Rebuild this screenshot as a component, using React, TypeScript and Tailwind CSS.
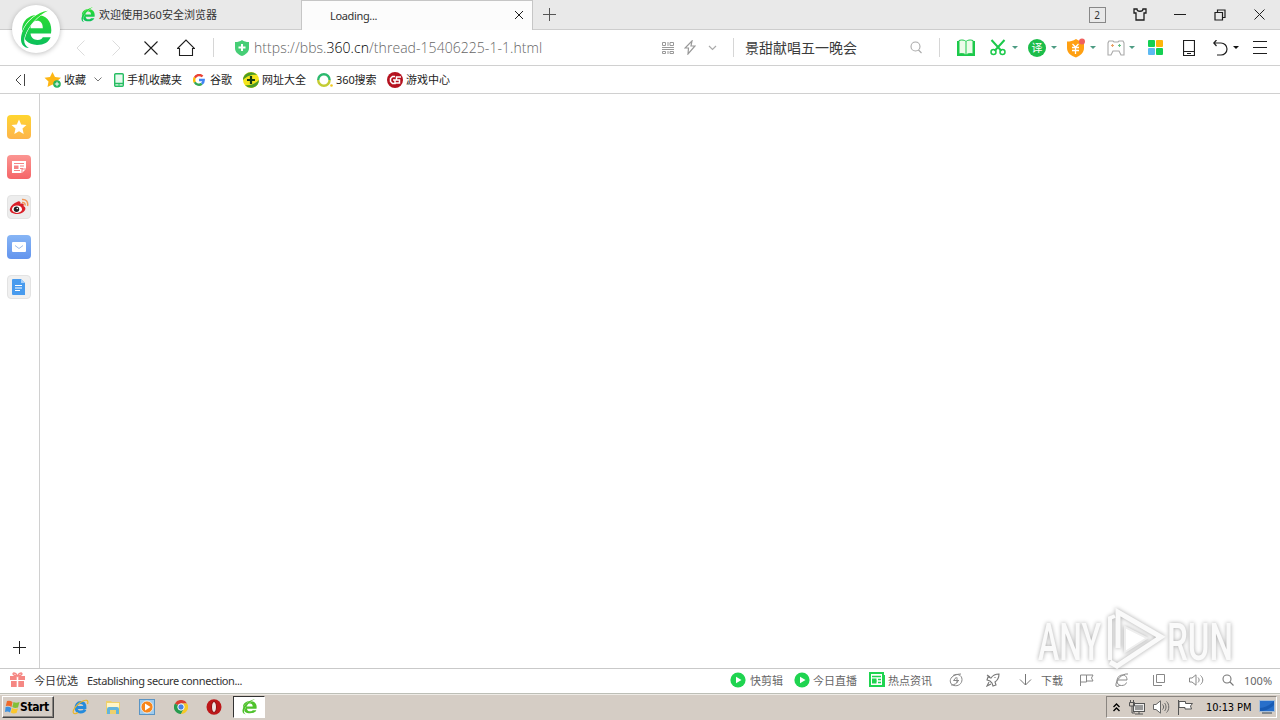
import type { ReactNode } from "react";

const GREEN = "#1cc94b";

// fixed-width slot, content centered inside
const Slot = ({ className = "", children }: { className?: string; children?: ReactNode }) => (
  <div className={`flex h-full shrink-0 items-center justify-center ${className}`}>{children}</div>
);

const Label = ({ className = "", children }: { className?: string; children: ReactNode }) => (
  <span className={`shrink-0 whitespace-nowrap ${className}`}>{children}</span>
);

const BrowserLogo = ({ className = "", flat = false }: { className?: string; flat?: boolean }) => (
  <svg className={className} viewBox="60 30 94 116" preserveAspectRatio="none" fill="none">
    <defs>
      <linearGradient id="leaf" gradientUnits="userSpaceOnUse" x1="0" y1="33" x2="0" y2="143">
        <stop offset="0" stopColor="#2fe02c" />
        <stop offset="1" stopColor="#08bd60" />
      </linearGradient>
    </defs>
    <path
      fillRule="evenodd"
      fill={flat ? "#4fc22c" : "url(#leaf)"}
      d="M151 100H91C92 112 100 119 112 119C120 119 124 116 127 111H150C144 126 131 134 110 134C84 134 66 116 66 89C66 63 86 45 110 45C136 45 152 62 152 90ZM91 84H127C127 70 121 62 110 62C99 62 92 71 91 84Z"
    />
    <path
      d="M142 32C112 36 78 62 66 98C58 122 65 141 86 143C73 135 69 124 75 106C85 76 112 46 142 32Z"
      fill={flat ? "#4fc22c" : "url(#leaf)"}
      stroke="#fff"
      strokeWidth="3.500"
      paintOrder="stroke"
    />
  </svg>
);

const Caret = ({ color = "#4d9c83" }: { color?: string }) => (
  <svg width="6" height="3" viewBox="0 0 6 3">
    <path d="M0 0H6L3 3Z" fill={color} />
  </svg>
);

const Line = ({
  d,
  w,
  h,
  color = "#1e1e1e",
  sw = 1,
}: {
  d: string;
  w: number;
  h: number;
  color?: string;
  sw?: number;
}) => (
  <svg width={w} height={h} viewBox={`0 0 ${w} ${h}`} fill="none" stroke={color} strokeWidth={sw}>
    <path d={d} />
  </svg>
);

const TabBar = () => (
  <div className="flex h-[30px] items-stretch border-b border-[#cdcdcd] bg-[#e9e9e9] text-[11px] text-[#333]">
    <div className="flex w-[301px] items-center pl-[81px]">
      <BrowserLogo className="h-[16px] w-[14px]" />
      <Label className="ml-[4px]">欢迎使用360安全浏览器</Label>
    </div>
    <div className="-mb-px flex w-[232px] items-center border-x border-t border-[#c6c6c6] bg-[#fcfcfc] pr-[8px] pb-px pl-[28px]">
      <Label className="grow tracking-[-0.35px]">Loading...</Label>
      <Line w={10} h={10} d="M1 1L9 9M9 1L1 9" />
    </div>
    <Slot className="w-[32px]">
      <Line w={13} h={13} d="M6.500 0V13M0 6.500H13" color="#555" />
    </Slot>
    <div className="grow" />
    <Slot className="w-[20px]">
      <span className="flex h-[16px] w-[17px] items-center justify-center border border-[#888] text-[10px]">2</span>
    </Slot>
    <Slot className="ml-[12px] w-[42px]">
      <Line w={14} h={13} sw={1.3} d="M4 1H1V5H3V12H11V5H13V1H10C10 4 4 4 4 1Z" />
    </Slot>
    <Slot className="w-[38px]">
      <Line w={12} h={2} d="M0 .5H12" />
    </Slot>
    <Slot className="w-[41px]">
      <Line w={12} h={12} sw={1.2} d="M1 3.500H8.500V11H1ZM3.500 3V1H11V8.500H9" />
    </Slot>
    <Slot className="mr-[1px] w-[39px]">
      <Line w={11} h={11} d="M.5 .5L10.500 10.500M10.500 .5L.5 10.500" />
    </Slot>
  </div>
);

const Divider = () => <span className="h-[19px] w-px bg-[#d6d6d6]" />;

const Toolbar = () => (
  <div className="flex h-[36px] items-center border-b border-[#d0d0d0] bg-white">
    <Slot className="ml-[63px] w-[34px]">
      <Line w={9} h={16} d="M8.500 .5L1 8L8.500 15.500" color="#dcdcdc" />
    </Slot>
    <Slot className="ml-px w-[36px]">
      <Line w={9} h={16} d="M.5 .5L8 8L.5 15.500" color="#dcdcdc" />
    </Slot>
    <Slot className="w-[34px]">
      <Line w={14} h={14} sw={1.1} d="M.5 .5L13.500 13.500M13.500 .5L.5 13.500" />
    </Slot>
    <Slot className="w-[36px]">
      <Line w={18} h={18} sw={1.1} d="M.5 9.500L9 1L17.500 9.500H15.500V16.500H2.500V9.500Z" />
    </Slot>
    <Slot className="w-[19px]">
      <Divider />
    </Slot>
    <Slot className="ml-[11px] w-[16px]">
      <svg width="14" height="16" viewBox="0 0 14 16">
        <path d="M7 0C9 1.500 11 2 14 2V8C14 12 11 14.500 7 16C3 14.500 0 12 0 8V2C3 2 5 1.500 7 0Z" fill="#46ce76" />
        <path d="M7 4V11M3.500 7.500H10.500" stroke="#fff" strokeWidth="2" />
      </svg>
    </Slot>
    <Label className="ml-[4px] w-[405px] pt-px font-['Open_Sans','Noto_Sans_CJK_SC',sans-serif] text-[14px] font-light tracking-[0.05px] text-[#666]">
      https://bbs.<span className="text-black">360.cn</span>/thread-15406225-1-1.html
    </Label>
    <Slot className="w-[18px]">
      <Line
        w={12}
        h={12}
        color="#999"
        d="M.5 .5H3.500V3.500H.5ZM8 .5H11.500V3.500H8ZM6 0V4M0 5.500H12M0 7.500H12M.5 9.500H3.500V11.500H.5ZM8 9.500H11.500V11.500H8ZM6 9V12"
      />
    </Slot>
    <Slot className="ml-[2px] w-[22px]">
      <Line w={12} h={15} sw={1.2} color="#999" d="M8 1L1 8H4.500L4 14L11 6H7Z" />
    </Slot>
    <Slot className="w-[22px]">
      <Line w={9} h={6} sw={1.2} color="#aaa" d="M1 1L4.500 4.500L8 1" />
    </Slot>
    <Slot className="w-[20px]">
      <Divider />
    </Slot>
    <Label className="ml-[2px] w-[165px] text-[14px] text-[#3c3c3c]">景甜献唱五一晚会</Label>
    <Slot className="w-[12px]">
      <Line w={12} h={13} sw={1.1} color="#aaa" d="M1 5.500A4.500 4.500 0 1 0 10 5.500A4.500 4.500 0 1 0 1 5.500M8.500 9L11.500 12" />
    </Slot>
    <Slot className="ml-[12px] w-[10px]">
      <Divider />
    </Slot>

    {/* extensions */}
    <Slot className="ml-[12px] w-[20px]">
      <svg width="18" height="18" viewBox="0 0 18 18">
        <path d="M0 2H2V15H16V2H18V17H0Z" fill={GREEN} />
        <path d="M2 1.500C5 .5 7.500 1 9 2.500C10.500 1 13 .5 16 1.500V15C13 14 11 14.500 9 16C7 14.500 5 14 2 15Z" fill="#edfbe9" stroke={GREEN} />
        <path d="M9 3V15" stroke={GREEN} />
      </svg>
    </Slot>
    <Slot className="ml-[12px] w-[20px]">
      <svg width="16" height="17" viewBox="0 0 16 17" fill="none" stroke={GREEN} strokeWidth="2">
        <path d="M1.500 1L11.500 12M14.500 1L4.500 12" />
        <circle cx="3.500" cy="13" r="2.500" strokeWidth="1.500" />
        <circle cx="12.500" cy="13" r="2.500" strokeWidth="1.500" />
      </svg>
    </Slot>
    <Slot className="ml-[4px] w-[6px]">
      <Caret />
    </Slot>
    <Slot className="ml-[9px] w-[20px]">
      <span className="flex h-[18px] w-[18px] items-center justify-center rounded-full bg-[#1cbd4a] text-[11px] leading-none text-white">
        译
      </span>
    </Slot>
    <Slot className="ml-[4px] w-[6px]">
      <Caret />
    </Slot>
    <Slot className="ml-[9px] w-[20px]">
      <svg width="20" height="20" viewBox="0 0 20 20">
        <path d="M10 1C13 3 15 3.500 18 3.500V10C18 15 14 17.500 10 19.500C5 17.500 1 15 1 10V3.500C4 3.500 7 3 10 1Z" fill="#ffa012" />
        <path d="M6.500 6L9.500 9L12.500 6M6 9.500H13M6 12.500H13M9.500 9V16" stroke="#fff" strokeWidth="1.300" fill="none" />
        <circle cx="16" cy="3.500" r="3" fill="#f0605f" />
      </svg>
    </Slot>
    <Slot className="ml-[4px] w-[6px]">
      <Caret />
    </Slot>
    <Slot className="ml-[10px] w-[20px]">
      <svg width="18" height="16" viewBox="0 0 18 16" fill="none" stroke="#aaa" strokeWidth="1.100">
        <path d="M2 1H6L7 2H11L12 1H16L17 3V15H14L12 11H6L4 15H1V3Z" />
        <path d="M5.500 4V7M4 5.500H7" stroke="#e9a36a" />
        <path d="M12.500 4V7M11 5.500H14" stroke="#65c184" />
      </svg>
    </Slot>
    <Slot className="ml-[3px] w-[6px]">
      <Caret />
    </Slot>
    <Slot className="ml-[10px] w-[20px]">
      <div className="grid grid-cols-2 gap-px">
        <i className="h-[7px] w-[7px] rounded-[1px] bg-[#14cf52]" />
        <i className="h-[7px] w-[7px] rounded-[1px] bg-[#fdb50b]" />
        <i className="h-[7px] w-[7px] rounded-[1px] bg-[#5db9f2]" />
        <i className="h-[7px] w-[7px] rounded-[1px] bg-[#14cf52]" />
      </div>
    </Slot>
    <Slot className="ml-[14px] w-[20px]">
      <Line w={12} h={16} sw={1.2} d="M.5 .5H11.500V15.500H.5ZM1 11.500H11M4 13.500H8" />
    </Slot>
    <Slot className="ml-[11px] w-[20px]">
      <Line w={15} h={16} sw={1.2} d="M3.500 0L.8 3L3.500 6M1 3H8A5.800 5.800 0 0 1 8 15H4" />
    </Slot>
    <Slot className="ml-[2px] w-[8px]">
      <Caret color="#111" />
    </Slot>
    <Slot className="ml-[10px] w-[20px]">
      <Line w={14} h={13} d="M0 .5H14M0 6.500H14M0 12.500H14" />
    </Slot>
  </div>
);

const BookmarkBar = () => (
  <div className="flex h-[28px] items-center border-b border-[#d0d0d0] bg-white text-[11px] text-[#222]">
    <Slot className="ml-[12px] w-[16px]">
      <Line w={10} h={12} d="M6 1L1 6L6 11M9.500 0V12" color="#444" />
    </Slot>
    <Slot className="ml-[16px] w-[18px]">
      <svg width="18" height="16" viewBox="0 0 18 16">
        <path d="M8.500 0L11 5L17 5.800L12.500 9.500L13.500 15L8.500 12.500L3.500 15L4.500 9.500L.5 5.800L6 5Z" fill="#fdb614" />
        <circle cx="13" cy="12" r="3.800" fill="#25b35d" />
        <path d="M13 9.800V14.200M10.800 12H15.200" stroke="#fff" />
      </svg>
    </Slot>
    <Label className="ml-[2px] w-[22px]">收藏</Label>
    <Slot className="ml-[7px] w-[9px]">
      <Line w={8} h={5} d="M.5 .5L4 4L7.500 .5" color="#777" />
    </Slot>
    <Slot className="ml-[11px] w-[12px]">
      <svg width="10" height="14" viewBox="0 0 10 14" fill="none" stroke="#27bd62" strokeWidth="1.400">
        <rect x=".7" y=".7" width="8.600" height="12.600" rx="1" fill="#e7faee" />
        <path d="M1 10.500H9M4.500 12H5.500" />
      </svg>
    </Slot>
    <Label className="ml-[2px] w-[55px]">手机收藏夹</Label>
    <Slot className="ml-[11px] w-[12px]">
      <svg width="12" height="12" viewBox="0 0 12 12" fill="none" strokeWidth="2.400">
        <path d="M9.500 2.500A4.700 4.700 0 0 0 1.800 3.700" stroke="#ea4335" />
        <path d="M1.800 3.700A4.700 4.700 0 0 0 1.800 8.300" stroke="#fbbc05" />
        <path d="M1.800 8.300A4.700 4.700 0 0 0 8.800 9.800" stroke="#34a853" />
        <path d="M8.800 9.800A4.700 4.700 0 0 0 10.700 6H6" stroke="#4285f4" />
      </svg>
    </Slot>
    <Label className="ml-[5px] w-[22px]">谷歌</Label>
    <Slot className="ml-[11px] w-[16px]">
      <svg width="16" height="16" viewBox="0 0 16 16">
        <circle cx="8" cy="8" r="8" fill="#f4e51b" />
        <path d="M14 3A8 8 0 0 0 0 8C3 5 8 2 14 3M2 13A8 8 0 0 0 16 8C13 11 8 14 2 13" fill="#4a9c26" />
        <path d="M8 4V12M4 8H12" stroke="#123b13" strokeWidth="2.200" />
      </svg>
    </Slot>
    <Label className="ml-[3px] w-[44px]">网址大全</Label>
    <Slot className="ml-[11px] w-[16px]">
      <svg width="16" height="14" viewBox="0 0 16 14" fill="none" strokeWidth="2.400">
        <path d="M1.200 7A5.700 5.700 0 0 1 12.600 7" stroke="#2cb96e" />
        <path d="M12.600 7A5.700 5.700 0 0 1 1.200 7" stroke="#c3cc32" />
        <circle cx="14.500" cy="12.500" r="1.300" fill="#f2c81e" />
      </svg>
    </Slot>
    <Label className="ml-[3px] w-[40px] tracking-[-0.1px]">360搜索</Label>
    <Slot className="ml-[11px] w-[16px]">
      <svg width="16" height="16" viewBox="0 0 16 16" fill="none">
        <circle cx="8" cy="8" r="8" fill="#b5121f" />
        <path d="M8 4.500H5.500L3.500 6.500V9.500L5.500 11.500H8V8H6M14 5H9.500V8H12.500V11H8.500" stroke="#fff" strokeWidth="1.500" />
      </svg>
    </Slot>
    <Label className="ml-[3px]">游戏中心</Label>
  </div>
);

const Sidebar = () => (
  <aside className="flex w-[40px] shrink-0 flex-col items-center gap-4 border-r border-[#d0d0d0] bg-white pt-[21px] pr-px">
    <div className="flex h-6 w-6 items-center justify-center rounded-[4px] bg-gradient-to-b from-[#ffd52e] to-[#fdb44a]">
      <svg width="16" height="16" viewBox="0 0 16 16">
        <path d="M8 .5L10.200 5.500L15.500 6L11.500 9.600L12.700 15L8 12.200L3.300 15L4.500 9.600L.5 6L5.800 5.500Z" fill="#fff" />
      </svg>
    </div>
    <div className="flex h-6 w-6 items-center justify-center rounded-[4px] bg-gradient-to-b from-[#fb9592] to-[#f56468]">
      <svg width="14" height="14" viewBox="0 0 14 14">
        <path d="M0 1H14V9L10 13H0Z" fill="#fff" />
        <path d="M2 3.500H12M8 6H12M8 8.500H11M2 10.500H8M10 13V9H14" stroke="#f58385" fill="none" />
        <path d="M2 5.500H6.500V9H2Z" fill="#f58385" />
      </svg>
    </div>
    <div className="flex h-6 w-6 items-center justify-center rounded-[4px] border border-[#e3e3e3] bg-[#ededed]">
      <svg width="20" height="18" viewBox="0 0 20 18" fill="none">
        <path d="M8 4C10 2.500 12 3.500 11.500 6C14 5 15.500 6 14.500 8C19 10 15 16 8.500 16C3 16 0 13.500 1 10.500C2 7.500 5 5 8 4Z" fill="#da2029" />
        <ellipse cx="8" cy="11.200" rx="5" ry="3.700" fill="#fff" />
        <circle cx="7.500" cy="11.300" r="2.700" fill="#222" />
        <circle cx="8.300" cy="10.500" r=".8" fill="#fff" />
        <path d="M13 4.500C15 4 16.500 5.500 16 7.500M13 1.500C17 1 19.500 4 18.500 8" stroke="#f29658" strokeWidth="1.500" />
      </svg>
    </div>
    <div className="flex h-6 w-6 items-center justify-center rounded-[4px] bg-gradient-to-b from-[#87b5f5] to-[#6394ee]">
      <svg width="14" height="10" viewBox="0 0 14 10">
        <rect width="14" height="10" rx="1" fill="#fff" />
        <path d="M3 3.500L7 6.500L11 3.500" stroke="#9dbbe9" fill="none" />
      </svg>
    </div>
    <div className="flex h-6 w-6 items-center justify-center rounded-[4px] border border-[#e3e3e3] bg-[#f0f0f0] pr-px">
      <svg width="13" height="16" viewBox="0 0 13 16">
        <path d="M1 0H9L13 4V16H1Q0 16 0 15V1Q0 0 1 0Z" fill="#489bee" />
        <path d="M9 0V4H13" fill="#a6d0fa" />
        <path d="M3 6.500H10M3 9H10M3 11.500H8" stroke="#fff" />
      </svg>
    </div>
    <div className="mt-auto mb-[14px]">
      <Line w={13} h={13} d="M6.500 0V13M0 6.500H13" />
    </div>
  </aside>
);

const Watermark = () => (
  <svg className="overflow-visible" width="206" height="70" viewBox="0 0 206 70">
    <g style={{ filter: "drop-shadow(0 0 2px #a8a8a8)" }}>
      <text x="4" y="52" fontFamily="Roboto" fontSize="51" fontWeight="500" fill="#fafafa" textLength="63" lengthAdjust="spacingAndGlyphs">
        ANY
      </text>
      <text x="133" y="52" fontFamily="Roboto" fontSize="51" fontWeight="500" fill="#fafafa" textLength="66" lengthAdjust="spacingAndGlyphs">
        RUN
      </text>
      <path d="M76 52V10L81 8" stroke="#fafafa" strokeWidth="4" fill="none" />
      <path d="M84 40V4L127 29L83 58L76 54" stroke="#fafafa" strokeWidth="5" fill="none" />
      <path d="M91 19L113 30L91 44Z" stroke="#eee" strokeWidth="2" fill="#fff" />
    </g>
  </svg>
);

const PlayBadge = () => (
  <svg className="mb-[2px] shrink-0" width="16" height="16" viewBox="0 0 16 16">
    <circle cx="8" cy="8" r="7.600" fill="#1fd450" />
    <path d="M6 4.700L11.500 8L6 11.300Z" fill="#fff" />
  </svg>
);

const StatusBar = () => (
  <div className="relative flex h-[25px] items-center border-t border-[#c9c9c9] bg-white pb-px text-[11px] text-[#666]">
    <Slot className="ml-[9px] w-[17px] pb-[2px]">
      <svg width="15" height="15" viewBox="0 0 15 15">
        <path d="M0 4H6.700V8H0ZM8.300 4H15V8H8.300ZM1 9H6.700V15H1ZM8.300 9H14V15H8.300Z" fill="#f58783" />
        <path d="M7.500 4C3 4 2 1 4 1C6 1 7 3 7.500 4C8 3 9 1 11 1C13 1 12 4 7.500 4" stroke="#f58783" strokeWidth="1.300" fill="none" />
      </svg>
    </Slot>
    <Label className="ml-[8px] w-[53px] text-[#333]">今日优选</Label>
    <Label className="w-[643px] tracking-[-0.4px] text-[#333]">Establishing secure connection...</Label>
    <PlayBadge />
    <Label className="ml-[4px] w-[44px]">快剪辑</Label>
    <PlayBadge />
    <Label className="ml-[3px] w-[56px]">今日直播</Label>
    <svg className="mb-[2px] shrink-0" width="17" height="16" viewBox="0 0 17 16">
      <path d="M13 3H16V15H2" fill="#1fd450" />
      <rect x="1" y="1" width="13" height="13" fill="#fff" stroke="#1fd450" strokeWidth="2" />
      <path d="M3 4.500H12M9 7.500H12M9 10.500H12M3 9H7.500" stroke="#1fd450" strokeWidth="1.300" />
      <path d="M3 6.500H7.500V11.500H3Z" fill="#1fd450" />
    </svg>
    <Label className="ml-[2px] w-[57px]">热点资讯</Label>
    <Slot className="w-[22px] pb-[2px]">
      <Line w={14} h={14} color="#888" d="M4 2.500C8 0 13 2 13 6.500C13 11 9 13.500 5 12.500C1 11.500 0 7 3 4C5 2 9 1 12 1M7.500 4L4.500 7.500H10M8 4.500V10M2 12C6 12 8 10 9 8" />
    </Slot>
    <Slot className="ml-[14px] w-[24px] pb-[2px]">
      <Line w={14} h={14} sw={1.1} color="#777" d="M5 5C7 2 10 1 13 1C13 4 12 7 9 9L10 12L7 13L6 10L4 8L1 7L2 4ZM3 9L1 13L5 11M1 2L4 4M9 4V5" />
    </Slot>
    <Slot className="ml-[10px] w-[20px] pb-[2px]">
      <Line w={13} h={12} color="#777" d="M6.500 0V11M1 5.500L6.500 11L12 5.500" />
    </Slot>
    <Label className="ml-[6px] w-[22px]">下载</Label>
    <Slot className="ml-[13px] w-[22px] pb-[2px]">
      <Line w={14} h={12} color="#888" d="M.5 12V1H6.500V8H.5M6.500 1H13L11.500 4L13 7H6.500" />
    </Slot>
    <Slot className="ml-[14px] w-[20px] pb-[2px]">
      <Line w={14} h={14} color="#888" d="M3 7H12C12 3 9.500 2 7.500 2C4 2 2 5 2 8C2 11 4 12.500 6.500 12.500C9 12.500 11 11.500 11.500 9.500M13 1C7 0 0 8 1 13C2 14 4 13 5 12" />
    </Slot>
    <Slot className="ml-[17px] w-[20px] pb-[2px]">
      <Line w={12} h={12} color="#888" d="M3.500 .5H11.500V8.500H3.500ZM.5 1V11.500H9" />
    </Slot>
    <Slot className="ml-[17px] w-[20px] pb-[2px]">
      <Line w={15} h={12} color="#888" d="M.5 4H3L7 .8V11.200L3 8H.5ZM9 3.500C10.500 5 10.500 7 9 8.500M11.500 1.500C14.500 4 14.500 8 11.500 10.500" />
    </Slot>
    <Slot className="ml-[12px] w-[20px] pb-[2px]">
      <Line w={12} h={12} color="#777" sw={1.1} d="M1 5A4 4 0 1 0 9 5A4 4 0 1 0 1 5M8 8L11.500 11.500" />
    </Slot>
    <Label className="ml-[6px]">100%</Label>
  </div>
);

const Taskbar = () => (
  <div className="flex h-[27px] items-center border-t border-[#bdbfb7] bg-[#d5cdc5] font-['DejaVu_Sans_Condensed','Liberation_Sans',sans-serif] text-[11px] text-black shadow-[inset_0_1px_0_#eeebe6]">
    <button className="ml-[2px] flex h-[22px] w-[52px] items-center border border-t-white border-r-[#444] border-b-[#444] border-l-white pl-[2px] shadow-[inset_-1px_-1px_0_#8a8580]">
      <svg width="15" height="14" viewBox="0 0 15 14">
        <path d="M2 1Q5 0 7.500 2L6.500 7Q4 5 .8 6Z" fill="#f06a2b" />
        <path d="M8.500 2Q11 3.500 14.500 2L13 7.500Q10 8.500 7.300 7Z" fill="#82bf39" />
        <path d="M.6 7Q4 6 6.300 8L5 12.500Q3 11 0 12Z" fill="#3e91df" />
        <path d="M7 8Q10 9.500 13 8.500L11.500 13Q8 14 5.800 12.500Z" fill="#fbc72d" />
      </svg>
      <span className="text-[12px] font-bold tracking-[-0.4px]">Start</span>
    </button>
    <Slot className="ml-[17px] w-[18px]">
      <svg width="17" height="16" viewBox="0 0 17 16" fill="none">
        <path d="M5 8.500H13C13 5 11 3.500 8.500 3.500C5.500 3.500 4 6 4 8.500C4 12 6.500 13 8.500 13C11 13 12.500 12 13 10.500" stroke="#258bdc" strokeWidth="2.800" />
        <path d="M15.500 5C17 1 14 0 9 3C4 6 0 12 1.500 14C2 15 4 15 6 13.500" stroke="#e8b62c" strokeWidth="1.200" />
      </svg>
    </Slot>
    <Slot className="ml-[15px] w-[18px]">
      <svg width="16" height="15" viewBox="0 0 16 15">
        <path d="M1 1H6L7 2H15V14H1Z" fill="#eed06c" />
        <path d="M2 3H14V9H2Z" fill="#fff5c7" />
        <path d="M2 14V9Q2 7 4 7H12Q14 7 14 9V14H11V10H5V14Z" fill="#62b4dc" />
      </svg>
    </Slot>
    <Slot className="ml-[16px] w-[18px]">
      <svg width="16" height="16" viewBox="0 0 16 16">
        <rect x=".5" y=".5" width="15" height="15" fill="#9fcbed" stroke="#5a94c4" />
        <circle cx="8" cy="8" r="6" fill="#f7861c" stroke="#fff" strokeWidth=".7" />
        <path d="M6 4.500L11.500 8L6 11.500Z" fill="#fff" />
      </svg>
    </Slot>
    <Slot className="ml-[16px] w-[18px]">
      <svg width="14" height="14" viewBox="0 0 14 14">
        <path d="M7 7L.9 3.500A7 7 0 0 1 13.100 3.500H7Z" fill="#db3e30" />
        <path d="M7 7L.9 3.500A7 7 0 0 0 7 14L10 8.500Z" fill="#279b4e" />
        <path d="M7 3.500H13.100A7 7 0 0 1 7 14L10 8.500Z" fill="#f6c927" />
        <circle cx="7" cy="7" r="3.200" fill="#4783e5" stroke="#fff" />
      </svg>
    </Slot>
    <Slot className="ml-[15px] w-[18px]">
      <svg width="16" height="16" viewBox="0 0 16 16">
        <ellipse cx="8" cy="8" rx="7.500" ry="7.800" fill="#bd1719" />
        <ellipse cx="8" cy="8" rx="2.500" ry="5.500" fill="#eee5e3" stroke="#8d0c0e" />
      </svg>
    </Slot>
    <div className="ml-[10px] flex h-[22px] w-[32px] items-center justify-center border border-t-[#333] border-r-white border-b-white border-l-[#333] bg-white">
      <BrowserLogo className="h-[16px] w-[15px]" flat />
    </div>
    <div className="grow" />
    <div className="mr-[3px] flex h-[22px] w-[171px] items-center border border-t-[#8a8580] border-r-white border-b-white border-l-[#8a8580]">
      <Slot className="ml-[3px] w-[12px]">
        <Line w={7} h={9} sw={1.4} color="#000" d="M.5 4L3.500 1L6.500 4M.5 8L3.500 5L6.500 8" />
      </Slot>
      <Slot className="ml-[6px] w-[18px]">
        <svg width="16" height="15" viewBox="0 0 16 15" fill="none" stroke="#555">
          <rect x="4.500" y="3.500" width="11" height="8" fill="#eee" />
          <path d="M6 5H14V10H6Z" fill="#999" stroke="none" />
          <path d="M6 14H14M10 12V14M.5 2.500H5.500V6H.5ZM1.500 0V2M4.500 0V2M3 6V13H6" />
        </svg>
      </Slot>
      <Slot className="ml-[6px] w-[18px]">
        <svg width="17" height="14" viewBox="0 0 17 14" fill="none" stroke="#666">
          <path d="M.5 4.500H3L7.500 .8V13.200L3 9.500H.5Z" fill="#fff" />
          <path d="M9.500 4.500C11 6 11 8 9.500 9.500M11.500 3C13.500 5 13.500 9 11.500 11M13.500 1.500C16.500 4 16.500 10 13.500 12.500" />
        </svg>
      </Slot>
      <Slot className="ml-[6px] w-[18px]">
        <svg width="17" height="15" viewBox="0 0 17 15" stroke="#555">
          <path d="M1.500 0V15" />
          <path d="M2 1.500H8.500V3.500H15.500L13.500 6L14.500 9H8V7.500H2Z" fill="#fff" />
        </svg>
      </Slot>
      <Label className="ml-[12px] w-[46px] tracking-[-0.1px]">10:13 PM</Label>
      <Slot className="ml-[7px] w-[16px]">
        <svg width="16" height="14" viewBox="0 0 16 14">
          <rect x=".5" y=".5" width="15" height="11" fill="#286fca" stroke="#a7bed8" />
          <path d="M1 8Q8 8 15 1V5Q9 11 1 11Z" fill="#185bb4" />
          <path d="M3 13H13" stroke="#345" />
        </svg>
      </Slot>
    </div>
  </div>
);

export default function App() {
  return (
    <div className="relative flex h-[720px] w-[1280px] flex-col overflow-hidden bg-white font-['Noto_Sans','Noto_Sans_CJK_SC',sans-serif] leading-none">
      <TabBar />
      <Toolbar />
      <BookmarkBar />
      <div className="flex min-h-0 grow">
        <Sidebar />
        <main className="grow bg-white" />
      </div>
      <StatusBar />
      <Taskbar />
      {/* round menu logo sits over the tab strip and the toolbar */}
      <div className="absolute top-[5px] left-[12px] flex h-[48px] w-[48px] items-center justify-center rounded-full bg-white shadow-[0_1px_5px_rgba(0,0,0,0.25)]">
        <BrowserLogo className="h-[39px] w-[32px]" />
      </div>
      <div className="absolute top-[608px] left-[1034px]">
        <Watermark />
      </div>
    </div>
  );
}
